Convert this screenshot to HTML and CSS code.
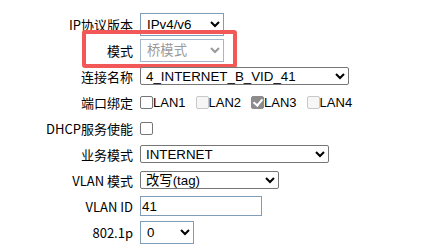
FILE: index.html
```html
<!DOCTYPE html>
<html lang="zh-CN">
<head>
  <meta charset="UTF-8">
  <title>WAN 连接配置</title>
  <link rel="stylesheet" href="styles.css">
</head>
<body>
  <form class="wan-form">
    <div class="row">
      <label class="label">IP协议版本</label>
      <select class="sel sel-blue w84">
        <option>IPv4/v6</option>
      </select>
    </div>
    <div class="row">
      <label class="label">模式</label>
      <select class="sel sel-off w84" disabled>
        <option>桥模式</option>
      </select>
      <span class="mark"></span>
    </div>
    <div class="row">
      <label class="label">连接名称</label>
      <select class="sel sel-plain w209">
        <option>4_INTERNET_B_VID_41</option>
      </select>
    </div>
    <div class="row">
      <label class="label">端口绑定</label>
      <div class="ports">
        <label class="port"><input type="checkbox" class="chk">LAN1</label>
        <label class="port"><input type="checkbox" class="chk" disabled>LAN2</label>
        <label class="port"><input type="checkbox" class="chk" checked disabled>LAN3</label>
        <label class="port"><input type="checkbox" class="chk" disabled>LAN4</label>
      </div>
    </div>
    <div class="row">
      <label class="label">DHCP服务使能</label>
      <input type="checkbox" class="chk">
    </div>
    <div class="row">
      <label class="label">业务模式</label>
      <select class="sel sel-plain w189">
        <option>INTERNET</option>
      </select>
    </div>
    <div class="row">
      <label class="label">VLAN 模式</label>
      <select class="sel sel-plain w139">
        <option>改写(tag)</option>
      </select>
    </div>
    <div class="row">
      <label class="label">VLAN ID</label>
      <input type="text" class="txt" value="41">
    </div>
    <div class="row">
      <label class="label">802.1p</label>
      <select class="sel sel-blue w54">
        <option>0</option>
      </select>
    </div>
  </form>
</body>
</html>
```

FILE: styles.css
```css
body {
  margin: 0;
  background: #fff;
  font-family: "Noto Sans CJK SC", sans-serif;
  font-size: 13px;
  color: #000;
}

.wan-form {
  padding-top: 11px;
}

.row {
  display: flex;
  align-items: center;
  height: 26px;
  position: relative;
}

.label {
  width: 133px;
  text-align: right;
  margin-right: 7px;
  white-space: nowrap;
}

.sel {
  font-family: "Liberation Sans", "Noto Sans CJK SC", sans-serif;
  font-size: 13.33px;
  color: #000;
  background: #fff;
  margin: 0;
  box-sizing: border-box;
}

.sel-plain {
  height: 18px;
  padding: 0 0 0 1px;
  border: 1px solid #767676;
  border-radius: 2px;
}

.sel-blue {
  height: 23px;
  padding: 0 2px;
  border: 1px solid #7f9db9;
  border-radius: 0;
}

.sel-off {
  height: 23px;
  padding: 0 2px;
  border: 1px solid #a5b8cb;
  border-radius: 0;
  color: #9a9a9a;
  opacity: 1;
}

.w54 { width: 54px; }
.w84 { width: 84px; }
.w139 { width: 139px; }
.w189 { width: 189px; }
.w209 { width: 209px; }

.ports {
  display: flex;
  align-items: center;
}

.port {
  display: flex;
  align-items: center;
  font-family: "Liberation Sans", sans-serif;
  font-size: 13px;
  margin-right: 10px;
}

.chk {
  appearance: none;
  position: relative;
  box-sizing: border-box;
  width: 13px;
  height: 13px;
  margin: 0;
  border: 1px solid #767676;
  border-radius: 2px;
  background: #fff;
}

.chk:disabled {
  border-color: #c8c8c8;
  background: #f6f6f6;
}

.chk:checked:disabled {
  border-color: #8c8c8c;
  background: #8c8c8c;
}

.chk:checked::after {
  content: "";
  position: absolute;
  left: 3px;
  top: 0;
  width: 4px;
  height: 7px;
  border: solid #fff;
  border-width: 0 2px 2px 0;
  transform: rotate(40deg);
}

.txt {
  box-sizing: border-box;
  width: 122px;
  height: 20px;
  margin: 0;
  padding: 0 1px;
  border: 1px solid #7f9db9;
  font-family: "Liberation Sans", sans-serif;
  font-size: 13.33px;
}

.mark {
  position: absolute;
  left: 82px;
  top: -7px;
  width: 155px;
  height: 38px;
  box-sizing: border-box;
  border: 4px solid #f25858;
  border-radius: 3px;
  pointer-events: none;
}
```
